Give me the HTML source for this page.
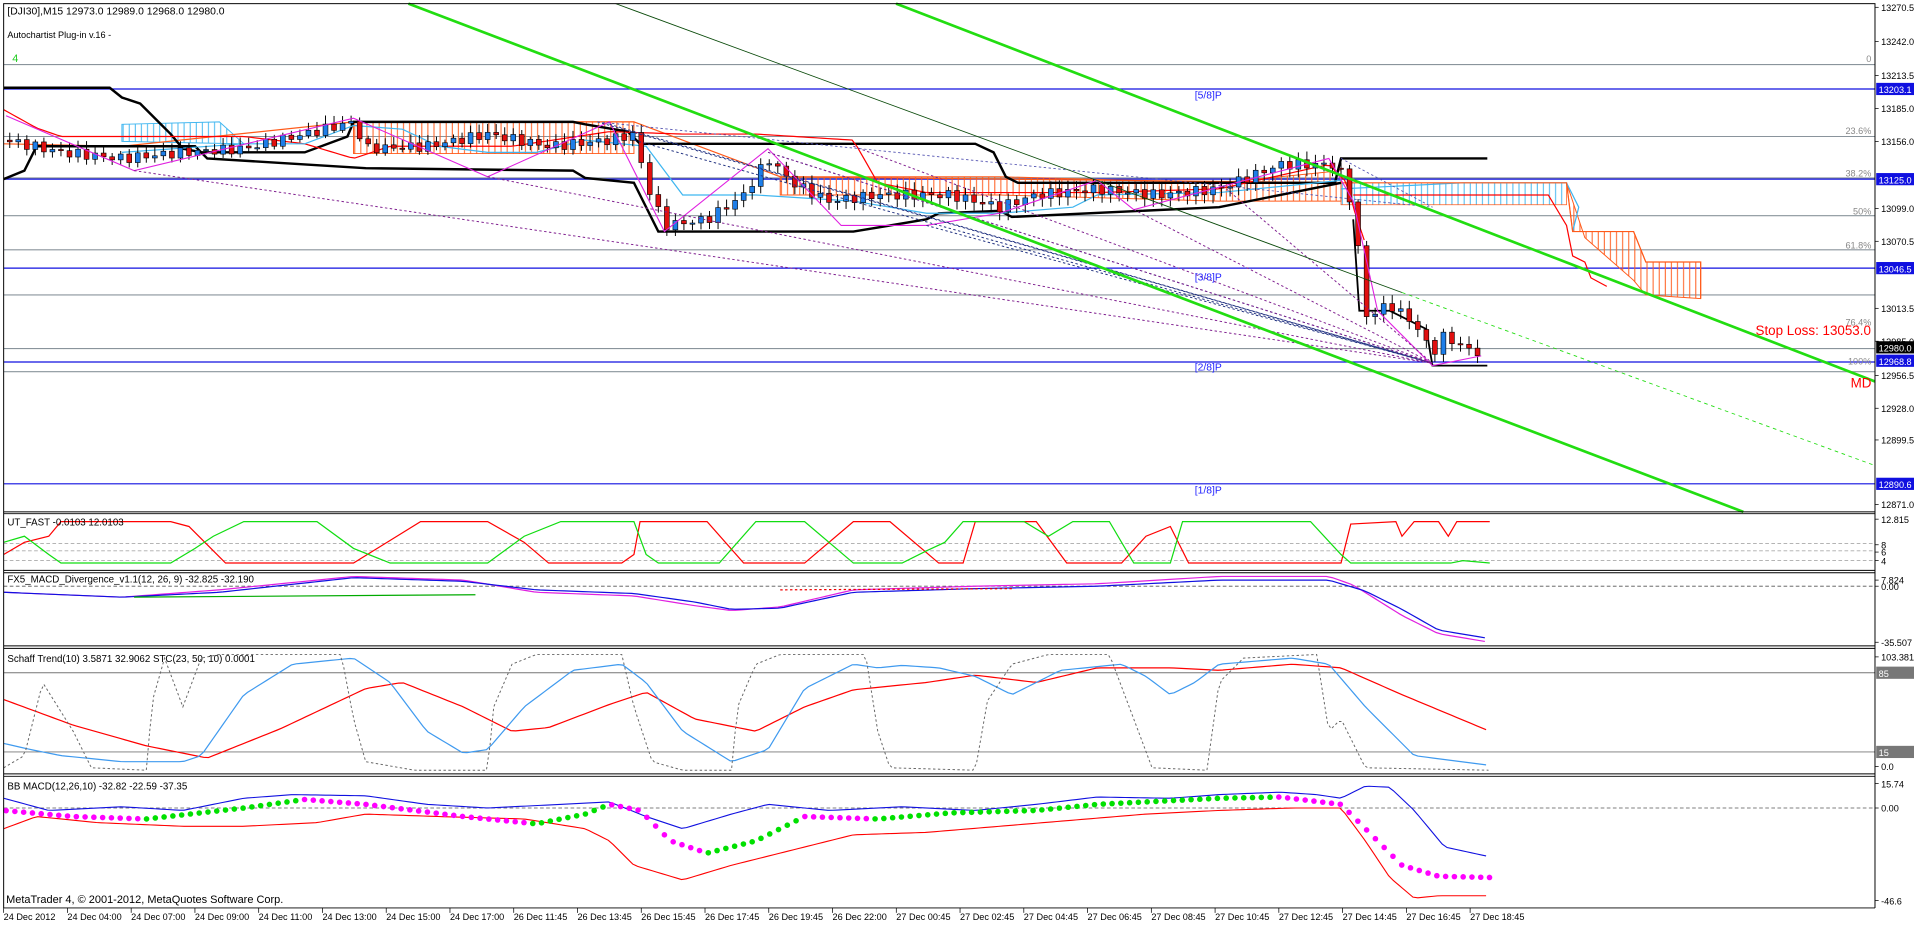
<!DOCTYPE html>
<html><head><meta charset="utf-8"><style>
html,body{margin:0;padding:0;background:#fff;overflow:hidden}
svg{display:block}
text{font-family:"Liberation Sans",sans-serif}
</style></head><body>
<svg id="s" width="1914" height="925" viewBox="0 0 1570 759" preserveAspectRatio="none" xmlns="http://www.w3.org/2000/svg">
<defs>
<pattern id="po" width="5" height="10" patternUnits="userSpaceOnUse"><line x1="1" y1="0" x2="1" y2="10" stroke="#ff5a1a" stroke-width="0.8"/></pattern>
<pattern id="pb" width="5" height="10" patternUnits="userSpaceOnUse"><line x1="1" y1="0" x2="1" y2="10" stroke="#3fb6f0" stroke-width="0.8"/></pattern>
</defs>
<rect width="1570" height="759" fill="#fff"/>
<g id="g"></g>
<!-- panel frames -->
<g fill="none" stroke="#000" stroke-width="0.8">
<rect x="3" y="3" width="1535" height="417"/>
<line x1="3" y1="421.5" x2="1538" y2="421.5"/>
<line x1="3" y1="468" x2="1538" y2="468"/><line x1="3" y1="470" x2="1538" y2="470"/>
<line x1="3" y1="530" x2="1538" y2="530"/><line x1="3" y1="532" x2="1538" y2="532"/>
<line x1="3" y1="635" x2="1538" y2="635"/><line x1="3" y1="637" x2="1538" y2="637"/>
<line x1="3" y1="745" x2="1538" y2="745"/>
<line x1="3" y1="420" x2="3" y2="745"/><line x1="1538" y1="420" x2="1538" y2="745"/>
</g>
<g font-size="8.5" fill="#000">
<text x="6" y="12">[DJI30],M15  12973.0 12989.0 12968.0 12980.0</text>
<text x="6" y="31" font-size="7.5">Autochartist Plug-in v.16 -</text>
<text x="10" y="51" fill="#2c2" font-size="9">4</text>
<text x="6" y="431" font-size="8">UT_FAST -0.0103 12.0103</text>
<text x="6" y="478" font-size="8">FX5_MACD_Divergence_v1.1(12, 26, 9) -32.825 -32.190</text>
<text x="6" y="543" font-size="8">Schaff Trend(10) 3.5871 32.9062  STC(23, 50, 10) 0.0001</text>
<text x="6" y="648" font-size="8">BB MACD(12,26,10) -32.82 -22.59 -37.35</text>
<text x="5" y="741" font-size="9">MetaTrader 4, © 2001-2012, MetaQuotes Software Corp.</text>
<text x="980" y="81" fill="#22f">[5/8]P</text>
<text x="980" y="230" fill="#22f">[3/8]P</text>
<text x="980" y="304" fill="#22f">[2/8]P</text>
<text x="980" y="405" fill="#22f">[1/8]P</text>
<g fill="#888" font-size="7.5" text-anchor="end">
<text x="1535" y="51">0</text><text x="1535" y="110">23.6%</text><text x="1535" y="145">38.2%</text>
<text x="1535" y="176">50%</text><text x="1535" y="204">61.8%</text><text x="1535" y="267">76.4%</text><text x="1535" y="299">100%</text>
</g>
<text x="1440" y="275" fill="#f00" font-size="11">Stop Loss: 13053.0</text>
<text x="1518" y="318" fill="#f00" font-size="11">MD</text>
</g>
<g id="ax" font-size="7.5" fill="#000"></g>
</svg>
<script>
var NS="http://www.w3.org/2000/svg",g=document.getElementById('g'),ax=document.getElementById('ax');
function el(t,a,p){var e=document.createElementNS(NS,t);for(var k in a)e.setAttribute(k,a[k]);(p||g).appendChild(e);return e}
function pl(pts,st,w,da,f){var a={points:pts.map(function(p){return p[0]+','+p[1]}).join(' '),fill:f||'none',stroke:st,'stroke-width':w||1};if(da)a['stroke-dasharray']=da;return el(f?'polygon':'polyline',a)}
function interp(k,x){for(var i=0;i<k.length-1;i++){if(x<=k[i+1][0]){var t=(x-k[i][0])/(k[i+1][0]-k[i][0]);return k[i][1]+t*(k[i+1][1]-k[i][1])}}return k[k.length-1][1]}
function series(k,x0,x1,st){var r=[];for(var x=x0;x<=x1;x+=st)r.push([x,interp(k,x)]);return r}
function hl(y,c,w,x2){el('line',{x1:3,y1:y,x2:x2||1538,y2:y,stroke:c,'stroke-width':w||0.8})}
// horizontal levels
[53,112,146,177,205,242,286,305].forEach(function(y){hl(y,'#8a949c',0.9)});
[73,147,220,297,397].forEach(function(y){hl(y,'#1010e0',1)});
// clouds
pl([[290,100],[520,100],[520,126],[290,126]],'#ff5a1a',0.8,null,'url(#po)');
pl([[100,102],[180,100],[200,118],[100,116]],'#3fb6f0',0.8,null,'url(#pb)');
pl([[640,145],[820,145],[1000,150],[1100,140],[1100,165],[1000,165],[820,160],[640,160]],'#ff5a1a',0.8,null,'url(#po)');
pl([[1100,150],[1250,150],[1285,150],[1285,168],[1100,168]],'#ff5a1a',0.6,null,'url(#pb)');
pl([[1285,150],[1290,190],[1340,190],[1350,215],[1395,215],[1395,245],[1350,242],[1340,230],[1300,195]],'#ff5a1a',0.8,null,'url(#po)');
pl([[1100,155],[1200,150],[1285,150],[1295,170],[1290,190]],'#3fb6f0',1);
pl([[3,118],[100,120],[290,100],[520,100],[640,145],[1100,150],[1285,150],[1290,190],[1340,190],[1350,215],[1395,215],[1395,245]],'#ff5a1a',1);
// ichimoku black
pl([[3,72],[90,72],[100,80],[115,85],[140,110],[150,122],[165,125],[250,125],[285,112],[290,100],[470,100],[480,102],[515,108],[525,118],[800,118],[815,125],[825,145],[835,150],[1095,150],[1100,130],[1220,130]],'#000',2);
pl([[3,147],[20,140],[30,120],[160,120],[170,130],[300,138],[470,140],[480,146],[520,150],[540,190],[700,190],[760,180],[770,175],[820,173],[830,178],[1000,170],[1100,150]],'#000',2);
pl([[1110,180],[1115,255],[1140,255],[1170,270],[1175,300],[1220,300]],'#000',1.5);
// tenkan / kijun dotted lines
pl(series([[3,90],[30,105],[50,112],[200,112],[250,118],[290,130],[320,120],[420,120],[500,108],[560,110],[620,110],[700,115],[720,150],[760,158],[820,158],[900,158],[1000,155],[1090,135],[1105,150],[1110,170],[1120,200]],3,1120,4),'#f00',1);
pl([[1110,160],[1270,160],[1285,185],[1290,210],[1300,215],[1305,228],[1318,235]],'#f00',1);
pl([[100,125],[200,118],[250,118],[290,103],[330,106],[360,120],[400,125],[440,125],[480,115],[530,120],[560,160],[620,160],[700,165],[760,175],[820,175],[880,170],[900,160],[1000,158],[1100,148]],'#3fb6f0',1);
// candles
var pk=[[5,115],[50,125],[100,130],[150,125],[200,122],[250,110],[290,100],[300,122],[350,120],[400,110],[450,120],[500,115],[520,110],[530,150],[545,185],[580,180],[610,160],[630,130],[650,150],[680,165],[720,160],[780,160],[820,170],[850,160],[900,155],[950,160],[1000,155],[1050,135],[1095,135],[1105,150],[1115,210],[1120,260],[1140,250],[1160,265],[1175,290],[1185,275],[1200,285],[1215,290]];
var prev=interp(pk,5);
for(var x=8;x<=1216;x+=7){var c=interp(pk,x)+Math.sin(x*0.37)*4,o=prev,hi=Math.min(o,c)-2-Math.abs(Math.sin(x*1.3))*5,lo=Math.max(o,c)+2+Math.abs(Math.cos(x*0.9))*5;
el('line',{x1:x,y1:hi,x2:x,y2:lo,stroke:'#000','stroke-width':0.8});
var up=c<o;el('rect',{x:x-2,y:Math.min(o,c),width:4,height:Math.max(1,Math.abs(c-o)),fill:up?'#1e7ee8':'#e01010',stroke:'#000','stroke-width':0.5});prev=c}
// zigzag magenta
pl([[5,95],[110,140],[290,97],[400,145],[500,100],[545,190],[630,122],[690,185],[760,185],[820,175],[900,148],[930,172],[1090,130],[1110,165],[1130,255],[1175,300],[1215,292]],'#e020e0',0.9);
// fan lines
[[490,100],[500,102],[630,125],[760,185],[520,115]].forEach(function(p){pl([p,[1175,298]],'#203080',0.8,'2,2')});
[[110,140],[400,145],[630,125],[700,120],[930,172],[1000,150]].forEach(function(p){pl([p,[1175,298]],'#802090',0.8,'2,2')});
[[490,100],[1100,130]].forEach(function(p){pl([p,[1175,170]],'#5050b0',0.7,'2,2')});
// green channel
pl([[335,3],[1430,420]],'#22dd11',2.2);
pl([[735,3],[1538,313]],'#22dd11',2.2);
pl([[505,3],[1150,240]],'#0a4a0a',0.7);
pl([[1150,240],[1538,382]],'#22dd11',0.7,'3,3');
// indicator: UT_FAST
[446,452,460].forEach(function(y){el('line',{x1:3,y1:y,x2:1538,y2:y,stroke:'#aaa','stroke-width':0.7,'stroke-dasharray':'3,2'})});
var utR=[[3,455],[20,445],[40,440],[50,428],[140,428],[155,432],[185,462],[230,462],[290,462],[345,428],[400,428],[430,445],[450,462],[510,462],[520,455],[525,428],[580,428],[610,462],[660,462],[700,428],[730,428],[770,462],[790,462],[800,428],[850,428],[875,462],[920,462],[940,440],[960,432],[975,462],[1100,462],[1108,430],[1145,428],[1150,440],[1160,428],[1180,428],[1188,440],[1195,428],[1222,428]];
var utG=[[3,445],[20,440],[40,455],[50,462],[140,462],[160,450],[175,440],[200,428],[260,428],[290,450],[320,462],[400,462],[430,440],[460,428],[520,428],[530,455],[540,462],[590,462],[620,428],[660,428],[700,462],[740,462],[760,452],[775,445],[790,428],[840,428],[860,440],[880,428],[910,428],[930,462],[960,462],[970,428],[1075,428],[1100,455],[1108,462],[1190,462],[1200,460],[1222,462]];
pl(utR,'#f00',1);pl(utG,'#1d1',1);
// MACD divergence
el('line',{x1:3,y1:481,x2:1538,y2:481,stroke:'#555','stroke-width':0.7,'stroke-dasharray':'3,2'});
pl(series([[3,486],[100,490],[180,484],[290,473],[380,476],[440,486],[520,489],[570,497],[600,501],[640,498],[700,484],[800,481],[900,479],[1000,473],[1090,473],[1110,480],[1150,505],[1180,520],[1222,527]],3,1222,5),'#e020e0',1);
pl(series([[3,486],[100,490],[180,486],[290,474],[380,477],[440,484],[520,487],[570,494],[600,500],[640,499],[700,486],[800,483],[900,481],[1000,476],[1090,476],[1120,485],[1150,500],[1180,517],[1222,524]],3,1222,5),'#1010e0',1);
pl([[110,490],[390,488]],'#0a0',1);pl([[640,484],[830,483]],'#e00',1,'2,2');
// Schaff
hl(552,'#777',0.8);hl(617,'#777',0.8);
pl(series([[3,574],[60,595],[120,612],[170,622],[230,598],[300,565],[330,560],[380,580],[420,600],[450,597],[500,578],[530,568],[570,590],[620,600],[660,580],[700,566],[760,560],[800,554],[850,560],[900,548],[960,548],[1000,550],[1060,545],[1100,548],[1150,570],[1222,600]],3,1222,4),'#f00',1);
pl(series([[3,610],[25,615],[50,620],[100,625],[150,625],[165,620],[200,570],[240,545],[290,540],[320,560],[350,600],[380,618],[400,615],[430,580],[470,550],[510,545],[530,560],[560,600],[600,625],[630,615],[660,565],[700,545],[720,548],[740,546],[770,548],[800,555],[830,570],[850,560],[870,550],[920,545],[940,555],[960,570],[980,560],[1000,545],[1060,540],[1090,545],[1120,580],[1160,620],[1222,628]],3,1222,4),'#3f9aef',1);
pl(series([[3,630],[20,620],[35,560],[60,600],[75,630],[120,632],[125,575],[135,540],[150,580],[165,540],[180,537],[280,537],[290,590],[300,625],[340,632],[400,632],[405,580],[420,545],[440,537],[510,537],[520,580],[535,625],[560,632],[600,632],[605,580],[620,545],[640,537],[710,537],[720,600],[730,630],[800,632],[810,575],[830,545],[860,537],[910,537],[930,590],[945,630],[990,632],[1000,560],[1020,540],[1080,537],[1090,600],[1100,590],[1120,630],[1222,632]],3,1222,3),'#666',0.8,'2,2');
// BB MACD
el('line',{x1:3,y1:663,x2:1538,y2:663,stroke:'#555','stroke-width':0.7,'stroke-dasharray':'3,2'});
var bbc=[[3,665],[60,670],[120,672],[200,663],[250,656],[300,660],[380,670],[440,676],[480,668],[500,660],[525,665],[550,690],[580,700],[620,690],[660,670],[720,672],[780,667],[850,665],[900,660],[960,657],[1000,655],[1050,654],[1100,660],[1120,680],[1150,710],[1180,719],[1222,720]];
pl(series([[3,655],[40,665],[100,662],[150,665],[200,655],[240,652],[300,653],[350,660],[400,663],[460,660],[500,658],[530,670],[560,680],[600,668],[630,660],[680,665],[740,662],[800,665],[850,660],[900,654],[960,655],[1000,652],[1050,650],[1080,652],[1100,655],[1120,645],[1140,646],[1160,665],[1185,695],[1222,703]],3,1222,4),'#1010e0',0.9);
pl(series([[3,680],[30,670],[80,675],[150,678],[200,678],[260,675],[300,668],[360,670],[430,672],[480,680],[500,690],[520,710],[560,722],[600,710],[640,700],[700,685],[760,683],[820,678],[880,673],[940,668],[1000,665],[1060,663],[1100,663],[1120,690],[1140,720],[1160,737],[1180,735],[1222,735]],3,1222,4),'#f00',0.9);
for(var x=5;x<=1222;x+=7.2){var y=interp(bbc,x),y2=interp(bbc,x+7.2);el('circle',{cx:x,cy:y,r:2.3,fill:y2<y?'#00e000':'#ff00ff'})}
// right axis labels
function lab(y,t,bg){if(bg){el('rect',{x:1539,y:y-5,width:31,height:10,fill:bg},ax);el('text',{x:1541,y:y+3.5,fill:'#fff'},ax).textContent=t}else{el('line',{x1:1538,y1:y,x2:1541,y2:y,stroke:'#000','stroke-width':0.6},ax);el('text',{x:1543,y:y+3},ax).textContent=t}}
[[6,'13270.5'],[34,'13242.0'],[62,'13213.5'],[89,'13185.0'],[116,'13156.0'],[171,'13099.0'],[198,'13070.5'],[253,'13013.5'],[280,'12985.0'],[308,'12956.5'],[335,'12928.0'],[361,'12899.5'],[414,'12871.0'],[426,'12.815'],[447,'8'],[453,'6'],[460,'4'],[476,'7.824'],[481,'0.00'],[527,'-35.507'],[539,'103.381'],[629,'0.0'],[643,'15.74'],[663,'0.00'],[739,'-46.6']].forEach(function(a){lab(a[0],a[1])});
lab(73,'13203.1','#1010e0');lab(147,'13125.0','#1010e0');lab(220,'13046.5','#1010e0');lab(285,'12980.0','#000');lab(296,'12968.8','#1010e0');lab(397,'12890.6','#1010e0');lab(552,'85','#777');lab(617,'15','#777');
// time axis
var tl=['24 Dec 2012','24 Dec 04:00','24 Dec 07:00','24 Dec 09:00','24 Dec 11:00','24 Dec 13:00','24 Dec 15:00','24 Dec 17:00','26 Dec 11:45','26 Dec 13:45','26 Dec 15:45','26 Dec 17:45','26 Dec 19:45','26 Dec 22:00','27 Dec 00:45','27 Dec 02:45','27 Dec 04:45','27 Dec 06:45','27 Dec 08:45','27 Dec 10:45','27 Dec 12:45','27 Dec 14:45','27 Dec 16:45','27 Dec 18:45'];
tl.forEach(function(t,i){var x=3+i*52.3;el('line',{x1:x,y1:745,x2:x,y2:749,stroke:'#000','stroke-width':0.6},ax);el('text',{x:x,y:755},ax).textContent=t});
</script>
</body></html>
